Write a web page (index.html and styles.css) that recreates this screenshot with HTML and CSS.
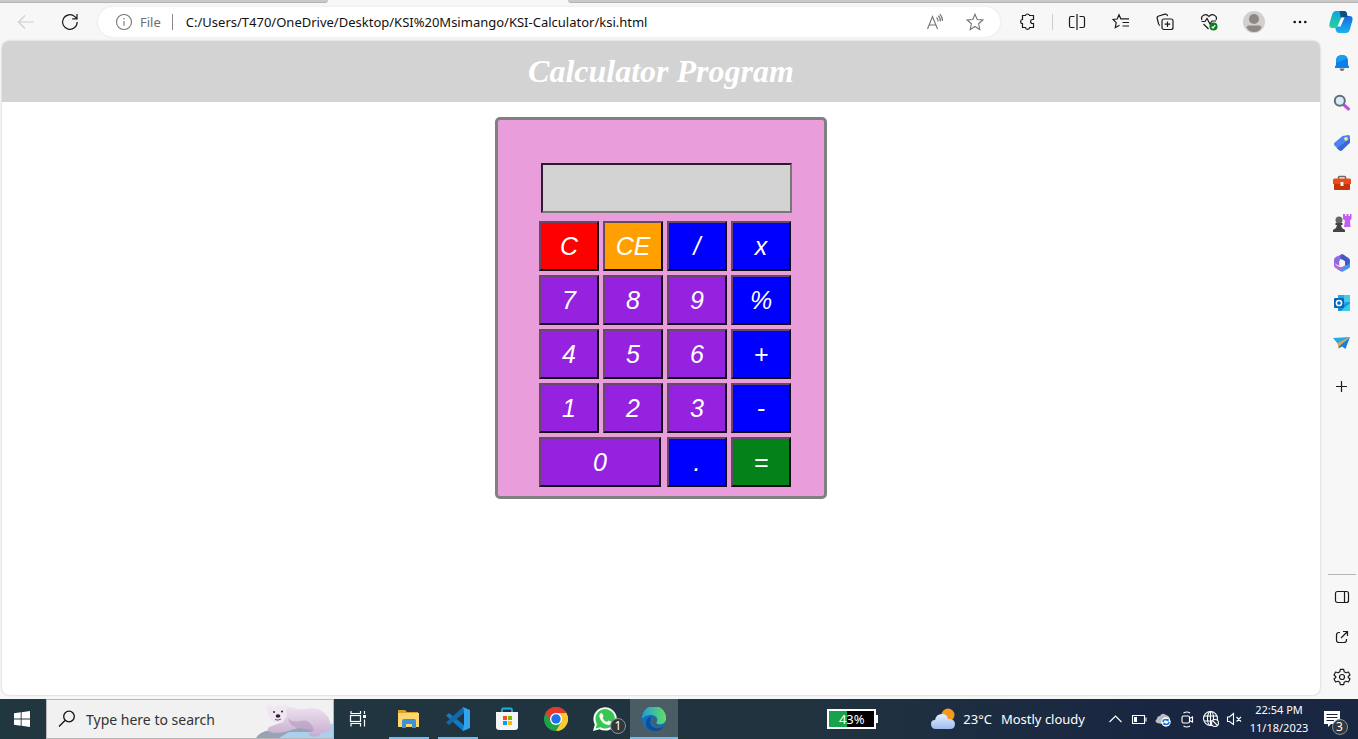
FILE: index.html
```html
<!DOCTYPE html>
<html lang="en">
<head>
<meta charset="utf-8">
<title>Calculator Program</title>
<link rel="stylesheet" href="styles.css">
</head>
<body>
<div class="tabstrip"><div class="tab tab-left"></div><div class="tab-active"></div><div class="tab tab-right"></div></div>

<header class="toolbar">
  <button class="tool nav faded" aria-label="Back"><svg width="18" height="16" viewBox="0 0 18 16"><path d="M17 8H1.500M8 1.500L1.500 8L8 14.500"/></svg></button>
  <button class="tool nav" aria-label="Refresh"><svg width="18" height="18" viewBox="0 0 18 18"><path d="M16.200 9A7.300 7.300 0 1 1 13.800 3.600L15.800 5.500M16 1V5.800H11.200"/></svg></button>
  <div class="address">
    <button class="site" aria-label="Site information"><svg width="18" height="18" viewBox="0 0 18 18"><circle cx="9" cy="9" r="7.500"/><path d="M9 8V12.800M9 5V6.500"/></svg><span>File</span></button>
    <input class="url" type="text" aria-label="Address" value="C:/Users/T470/OneDrive/Desktop/KSI%20Msimango/KSI-Calculator/ksi.html">
    <button class="inner" aria-label="Read aloud"><svg width="18" height="18" viewBox="0 0 18 18"><path d="M1.500 16L6.500 3.500L11.500 16M3.300 12H9.700M10.500 4.500Q12.300 5.800 12 8.500M12.200 2.800Q14.700 4.700 14.300 8.500M13.700 1.200Q16.700 4 16.500 8"/></svg></button>
    <button class="inner" aria-label="Add to favorites"><svg width="18" height="18" viewBox="0 0 18 18"><path d="M9 1.300L11.200 6.500L16.800 7L12.600 10.800L13.800 16.500L9 13.500L4.200 16.500L5.400 10.800L1.200 7L6.800 6.500Z"/></svg></button>
  </div>
  <button class="tool" aria-label="Extensions"><svg width="18" height="18" viewBox="0 0 18 18"><path d="M3.500 2.500H6.500C6.800 .5 10.200 .5 10.500 2.500H14.500V6.500H13.500C11 6.500 11 10.500 13.500 10.500H14.500V14.500H10.700C10.400 17 6.800 17 6.500 14.500H3.500V10.700C1 10.500 1 6.800 3.500 6.500Z"/></svg></button>
  <span class="divider"></span>
  <button class="tool" aria-label="Split screen"><svg width="18" height="18" viewBox="0 0 18 18"><path d="M9 1V17M6.500 3.500H3Q1.500 3.500 1.500 5V13Q1.500 14.500 3 14.500H6.500M11.500 3.500H15Q16.500 3.500 16.500 5V13Q16.500 14.500 15 14.500H11.500"/></svg></button>
  <button class="tool" aria-label="Favorites"><svg width="18" height="18" viewBox="0 0 18 18"><path d="M10.500 5.800H8.800L7 1.800L5.200 6L1 6.500L4.200 9.700L3.300 14.700L7.500 12.300M10.500 5.800H17M10.500 9.500H17M10.500 13H17"/></svg></button>
  <button class="tool" aria-label="Collections"><svg width="18" height="18" viewBox="0 0 18 18"><rect x="6" y="6" width="11" height="10.500" rx="2"/><path d="M11.500 8.500V14M8.700 11.200H14.300M4 12.500Q2.800 12 2.500 10.500L1.200 5.500Q.8 3.500 2.700 3L9 1.200Q10.800 .8 11.700 3"/></svg></button>
  <button class="tool" aria-label="Browser essentials"><svg width="18" height="18" viewBox="0 0 18 18"><path d="M2 7C0 3 5.800-.5 9 3.500C12-.5 18 3 16 7M1.500 8.500H5L7 5.500L10 11L12 8H16M3.500 11L8.500 16"/><circle cx="13.500" cy="13.500" r="4" fill="#107c22" stroke="none"/><path d="M11.700 13.600L13 15L15.300 12.200" stroke="#fff"/></svg></button>
  <button class="tool wide" aria-label="Profile"><svg width="22" height="22" viewBox="0 0 22 22" stroke="none"><circle cx="11" cy="11" r="11" fill="#d2cfcc"/><circle cx="11" cy="8" r="5" fill="#8b8886"/><path d="M3.500 16.500Q3.500 14.500 6 14.500H16Q18.500 14.500 18.500 16.500Q16 21 11 21Q6 21 3.500 16.500" fill="#8b8886"/></svg></button>
  <button class="tool wide" aria-label="Settings and more"><svg width="16" height="16" viewBox="0 0 16 16"><g fill="#111" stroke="none"><circle cx="2.700" cy="8" r="1.300"/><circle cx="8" cy="8" r="1.300"/><circle cx="13.300" cy="8" r="1.300"/></g></svg></button>
  <button class="tool copilot" aria-label="Copilot"><svg width="24" height="24" viewBox="0 0 24 24" stroke="none"><defs><linearGradient id="cpa" x1="0" y1="0" x2="0" y2="1"><stop offset="0" stop-color="#0ba5dd"/><stop offset="1" stop-color="#27d49a"/></linearGradient><linearGradient id="cpb" x1="0" y1="0" x2="0" y2="1"><stop offset="0" stop-color="#1769e0"/><stop offset="1" stop-color="#17b5ed"/></linearGradient></defs><path d="M7 1H15Q17.500 1 18 4L18.700 7H14Q12 7 11.300 9L9 16Q8.300 18 6 18H3Q-.5 18 .6 13L3 5Q4 1 7 1" fill="url(#cpa)"/><path d="M17 23H10Q7.500 23 6.800 20L6.200 17.500Q8.600 18 9.500 15L12 8Q12.800 6 15 6H20.500Q24.500 6 23.300 11L21 19Q20 23 17 23" fill="url(#cpb)"/><path d="M10.500 1H15Q17.500 1 18 4L18.700 7H14Q12.500 7 11.800 8Z" fill="#0c4e85"/><path d="M12.500 7.500H15.500L11.500 16.500H8.500Z" fill="#fff"/></svg></button>
</header>

<div class="middle">
  <main class="page">
    <h1 class="title">Calculator Program</h1>
    <form class="calculator">
      <input class="display" type="text" aria-label="Result" readonly>
      <div class="keys">
        <button type="button" class="key red">C</button>
        <button type="button" class="key orange">CE</button>
        <button type="button" class="key blue">/</button>
        <button type="button" class="key blue">x</button>
        <button type="button" class="key">7</button>
        <button type="button" class="key">8</button>
        <button type="button" class="key">9</button>
        <button type="button" class="key blue">%</button>
        <button type="button" class="key">4</button>
        <button type="button" class="key">5</button>
        <button type="button" class="key">6</button>
        <button type="button" class="key blue">+</button>
        <button type="button" class="key">1</button>
        <button type="button" class="key">2</button>
        <button type="button" class="key">3</button>
        <button type="button" class="key blue">-</button>
        <button type="button" class="key zero">0</button>
        <button type="button" class="key blue">.</button>
        <button type="button" class="key green">=</button>
      </div>
    </form>
  </main>

  <aside class="sidebar">
    <button class="side" aria-label="Notifications"><svg width="18" height="18" viewBox="0 0 18 18"><path d="M6.500 14.500H11.500Q11 17 9 17Q7 17 6.500 14.500" fill="#6a6e75"/><path d="M2 14V12.500L3 11V7Q3 1 9 1Q15 1 15 7V11L16 12.500V14Z" fill="#0f7fe8"/><path d="M3 7Q3 1 9 1Q13 1 14 4Q8 8 3 8Z" fill="#159fee"/></svg></button>
    <button class="side" aria-label="Search"><svg width="18" height="18" viewBox="0 0 18 18"><path d="M11.500 11.500L15.500 15" stroke="#c44be8" stroke-width="3" stroke-linecap="round"/><circle cx="6.800" cy="6.800" r="5" fill="#d5edfa" stroke="#666c73" stroke-width="2"/></svg></button>
    <button class="side" aria-label="Shopping"><svg width="18" height="18" viewBox="0 0 18 18"><path d="M9.500 2L15.500 1Q17 1 17 2.500V8.500L9 16.200Q7.500 17.500 6 16L1.500 11.500Q.3 10 1.500 8.800Z" fill="#4b83f0"/><path d="M17 8.500L9 16.200Q7.500 17.500 6 16L4 14L17 5Z" fill="#3a66dc"/><circle cx="13" cy="4.800" r="1.900" fill="#ffe785"/></svg></button>
    <button class="side" aria-label="Tools"><svg width="18" height="18" viewBox="0 0 18 18"><path d="M5.500 5V3.500Q5.500 2.500 6.500 2.500H11.500Q12.500 2.500 12.500 3.500V5" fill="none" stroke="#696969" stroke-width="1.500"/><rect x="1" y="5" width="16" height="11" rx="1" fill="#c7340c"/><path d="M0 6Q0 4.500 1.500 4.500H16.500Q18 4.500 18 6V10H0Z" fill="#e84a19"/><rect x="7.500" y="8" width="3" height="4" fill="#eee"/></svg></button>
    <button class="side" aria-label="Games"><svg width="20" height="20" viewBox="0 0 20 20"><path d="M11 1H13V3H14.500V1H16.500V3H18V1H19.500V6L18 7.500L18.500 14H12L13 7.500L11 6Z" fill="#c45df0"/><circle cx="7" cy="7" r="3.500" fill="#666"/><path d="M3.500 10H10.500V12H9L10 15L13 17V19H1V17L4 15L5 12H3.500Z" fill="#444"/></svg></button>
    <button class="side" aria-label="Microsoft 365"><svg width="18" height="18" viewBox="0 0 18 18"><path d="M5 2L8 .5Q9 0 10 .5L12 1.500Q6.500 4 6.500 8V12L1 9V6Q1 3.500 5 2" fill="#8a6ce0"/><path d="M8 .5Q9 0 10 .5L15.500 4Q17 5 17 7V12Q17 13 15.500 13.500L12 11V7.500L7 4.500Q8 1.500 8 .5" fill="#4358c5"/><path d="M17 8V12Q17 13.500 15.500 14.500L10 17.600Q9 18 8 17.500L4 15Q11 15 12 11Q15.500 12 17 8" fill="#3b9be8"/><path d="M1 7V11.500Q1 13 2.500 14L7 16.500Q11 16 12 11L9 12.800Q7 13.500 4.500 12Q1.500 10 1 7" fill="#ad69db"/><path d="M9 5.500L12 7.500V11L9 12.800L6.300 11V7.500Z" fill="#f7f7f7"/></svg></button>
    <button class="side" aria-label="Outlook"><svg width="18" height="18" viewBox="0 0 18 18"><rect x="5" y="1" width="12" height="14" fill="#27a7e8"/><path d="M11 1H17V8H11Z" fill="#48caee"/><path d="M5 17V13L17 8V16Q17 17 16 17Z" fill="#1790d9"/><path d="M12 13L17 9V17H8Z" fill="#37cce8"/><rect x="1" y="4" width="10" height="10" rx="1" fill="#0567b8"/><circle cx="6" cy="9" r="2.600" fill="none" stroke="#fff" stroke-width="1.500"/></svg></button>
    <button class="side" aria-label="Drop"><svg width="18" height="18" viewBox="0 0 18 18"><path d="M0 4L17 3L5 10Z" fill="#23a9ed"/><path d="M17 3L12.500 15L7 11Z" fill="#1780dc"/><path d="M17 3L4.500 9L5.500 14.500L7.500 10.500Z" fill="#e8a43c"/><path d="M5.500 14.500L7 11L9 12.500Z" fill="#1768ae"/></svg></button>
    <button class="side add" aria-label="Customize"><svg width="18" height="18" viewBox="0 0 18 18"><path class="line" d="M8.500 3V14M3 8.500H14"/></svg></button>
    <div class="side-bottom">
      <button class="side" aria-label="Hide sidebar"><svg width="18" height="18" viewBox="0 0 18 18"><rect class="line" x="2.500" y="3.500" width="13" height="11" rx="2"/><path class="line" d="M11.500 3.500V14.500"/></svg></button>
      <button class="side" aria-label="Open in new window"><svg width="18" height="18" viewBox="0 0 18 18"><path class="line" d="M7 4.500H6Q3.500 4.500 3.500 7V12Q3.500 14.500 6 14.500H11Q13.500 14.500 13.500 12V11M10 3.500H14.500V8M8 10L14.500 3.500"/></svg></button>
      <button class="side" aria-label="Settings"><svg width="18" height="18" viewBox="0 0 18 18"><path class="line" d="M7.300 1.300H10.700L11.200 3.800L13 4.800L15.400 4L17 7L15.200 8.500V9.500L17 11L15.400 14L13 13.200L11.200 14.200L10.700 16.700H7.300L6.800 14.200L5 13.200L2.600 14L1 11L2.800 9.500V8.500L1 7L2.600 4L5 4.800L6.800 3.800Z" stroke-linejoin="round"/><circle class="line" cx="9" cy="9" r="2.500"/></svg></button>
    </div>
  </aside>
</div>

<footer class="taskbar">
  <button class="start" aria-label="Start"><svg width="16" height="16" viewBox="0 0 16 16" fill="#fff"><path d="M0 2.200L6.700 1.300V7.500H0ZM7.600 1.200L16 0V7.500H7.600ZM0 8.400H6.700V14.700L0 13.800ZM7.600 8.400H16V16L7.600 14.800Z"/></svg></button>
  <label class="search">
    <svg width="18" height="18" viewBox="0 0 18 18" fill="none" stroke="#111" stroke-width="1.300"><circle cx="11" cy="6.500" r="5.300"/><path d="M7 10.500L1 16.500"/></svg>
    <input class="search-text" type="text" placeholder="Type here to search" aria-label="Search">
    <svg class="bear" width="78" height="37" viewBox="0 0 78 37"><defs><linearGradient id="fur" x1="0" y1="0" x2="0" y2="1"><stop offset="0" stop-color="#eee2ef"/><stop offset="1" stop-color="#c6acd0"/></linearGradient></defs><path d="M1 37Q4 31 15 29L60 22L78 24V37Z" fill="#98a3b6"/><path d="M24 37L34 31H68L78 22V37Z" fill="#a9d0ee"/><path d="M26 9Q30 4 36 6Q46 10 55 7Q66 6 73 16Q78 25 74 30Q70 32 66 32Q65 36 60 35.500Q54 36 54 33Q56 30 59 29Q50 28 43 27L30 31Q20 33 15 31Q11 29 14 26L25 22Z" fill="url(#fur)"/><path d="M13 10Q10 8 12 5Q15 3 18 6Q22 3 27 5Q29 2 32 4Q34 7 31 9Q33 15 30 18Q28 24 22 21Q17 21 15 17Q12 14 13 10" fill="#efe6f1"/><path d="M33 17Q37 22 45 20Q55 17 59 29Q50 28 43 27Q34 25 33 17" fill="#b08fbe" opacity=".5"/><circle cx="19" cy="11" r="1" fill="#29202d"/><circle cx="27" cy="10.500" r="1" fill="#29202d"/><ellipse cx="23" cy="15" rx="2.300" ry="1.700" fill="#251f29"/><path d="M20 18.500Q23 20 26 18" fill="none" stroke="#6c5473"/></svg>
  </label>
  <button class="app view" aria-label="Task view"><svg width="18" height="18" viewBox="0 0 18 18" fill="none" stroke="#fff" stroke-width="1.200"><path d="M2 1V3.500H11.500V1M2 16.500V13.500H11.500V16.500M15.500 1V4M15.500 9.500V16.500"/><rect x="1.500" y="5.500" width="10" height="6"/><rect x="14" y="5" width="3" height="3" fill="#fff" stroke="none"/></svg></button>
  <button class="app open" aria-label="File Explorer"><svg width="24" height="24" viewBox="0 0 24 24"><path d="M1 3H8L10 5H21V9H1Z" fill="#dca02b"/><path d="M1 6H22V20H1Z" fill="#ffd66b"/><path d="M5 21V14Q5 12 7 12H17Q19 12 19 14V21H15V17H9V21Z" fill="#3e91d6"/></svg></button>
  <button class="app open" aria-label="Visual Studio Code"><svg width="24" height="24" viewBox="0 0 24 24"><path d="M0 8.500L3 6L18 18V24H17Z" fill="#127bc4"/><path d="M0 15.500L17 0L18 6L3 18Z" fill="#1468a8"/><path d="M17 0L24 3V21L17 24L18 18V6Z" fill="#32a5ed"/></svg></button>
  <button class="app" aria-label="Microsoft Store"><svg width="24" height="24" viewBox="0 0 24 24"><path d="M7 6V3Q7 1.500 8.500 1.500H15.500Q17 1.500 17 3V6" fill="none" stroke="#22aee0" stroke-width="1.800"/><path d="M1 5H23V20Q23 23 20 23H4Q1 23 1 20Z" fill="#f5f5f5"/><path d="M8 9H12V13H8Z" fill="#f25022"/><path d="M13 9H17V13H13Z" fill="#7fba00"/><path d="M8 14H12V18H8Z" fill="#00a4ef"/><path d="M13 14H17V18H13Z" fill="#ffb900"/></svg></button>
  <button class="app" aria-label="Google Chrome"><svg width="24" height="24" viewBox="0 0 24 24"><circle cx="12" cy="12" r="12" fill="#1fa34a"/><path d="M12 6H22.400A12 12 0 0 1 12 24L17.200 15Z" fill="#fcc934"/><path d="M1.600 6A12 12 0 0 1 22.400 6H12L6.800 15Z" fill="#e33b2e"/><circle cx="12" cy="12" r="6" fill="#fff"/><circle cx="12" cy="12" r="4.700" fill="#1a73e8"/></svg></button>
  <button class="app" aria-label="WhatsApp"><span class="stack"><svg width="24" height="24" viewBox="0 0 24 24"><path d="M0 24L1.800 17.500A11.700 11.700 0 1 1 6.500 22.200Z" fill="#f5fff6"/><path d="M2.500 21.500L4 17A9.700 9.700 0 1 1 7.500 20.300Z" fill="#38c652"/><path d="M7 7Q8.500 5 9.500 7L10.500 9Q10.500 10 9.500 11Q11 14 14 15L15.500 13.500L18.500 15Q18 18 15.500 18Q8.500 17 6.500 10Q6 8 7 7" fill="#fff"/></svg><span class="badge chat">1</span></span></button>
  <button class="app current" aria-label="Microsoft Edge"><svg width="24" height="24" viewBox="0 0 24 24"><defs><linearGradient id="ea"><stop offset="0" stop-color="#219bdc"/><stop offset="1" stop-color="#61df63"/></linearGradient></defs><circle cx="12" cy="12" r="12" fill="#1271bf"/><path d="M0 12A12 12 0 0 1 24 10C25 17 18 19 14 16C17 13 15 8 9 8Q3 8 0 12" fill="url(#ea)"/><path d="M9 10Q6 19 14 21Q18 22 22 19Q18 25 11 24Q3 22 4 15Q5 10 10 9Z" fill="#0c4e99"/><path d="M11 11Q13 10 15 12Q15 14 13.500 15Q14 18 18 18.500L23 17Q18 21 14 20Q8 17 11 11" fill="#4b5d64"/></svg></button>

  <div class="status">
    <div class="battery"><span class="level">43%</span></div>
    <button class="weather"><svg width="26" height="22" viewBox="0 0 26 22"><defs><linearGradient id="cl" x1="0" y1="0" x2="0" y2="1"><stop offset="0" stop-color="#e5efff"/><stop offset="1" stop-color="#9fbcf0"/></linearGradient></defs><circle cx="18" cy="7" r="6.500" fill="#f49a1c"/><path d="M6 21Q1 21 1 16Q1 12 5 12Q6 6 12 6Q17 6 18 11Q25 11 25 16Q25 21 20 21Z" fill="url(#cl)"/></svg><span>23°C</span><span>Mostly cloudy</span></button>
    <div class="tray">
      <button aria-label="Show hidden icons"><svg width="18" height="18" viewBox="0 0 18 18"><path d="M3.500 12L9.500 6L15.500 12"/></svg></button>
      <button aria-label="Battery"><svg width="18" height="18" viewBox="0 0 18 18"><path d="M2.500 5.500H14.500V13.500H2.500ZM16 7.500V11.500"/><path d="M4 7H7V12H4Z" fill="#fff" stroke="none"/></svg></button>
      <button aria-label="OneDrive"><svg width="18" height="18" viewBox="0 0 18 18" stroke="none"><path d="M3 13Q0 11 3 9Q3 6 6 6Q8 2 12 5Q16 6 16 10L8 14Z" fill="#b8bdc5"/><circle cx="12" cy="12" r="4.700" fill="#fff"/><path d="M9 12Q9 9.500 12 9.500L14 10.500V9M15 12Q15 14.500 12 14.500L10 13.500V15" fill="none" stroke="#1674ce" stroke-width="1.400"/></svg></button>
      <button aria-label="Camera"><svg width="18" height="18" viewBox="0 0 18 18"><rect x="4" y="6" width="7.500" height="7" rx="1.500"/><path d="M11.500 8.500L14.500 7V12L11.500 10.500M5.500 3Q9 1 12 3M5.500 16Q9 18 12 16"/></svg></button>
      <button aria-label="Network"><svg width="18" height="18" viewBox="0 0 18 18"><circle cx="8.500" cy="8.500" r="7"/><ellipse cx="8.500" cy="8.500" rx="3" ry="7"/><path d="M2 6H15M2 11H10M8.500 1.500V15.500"/><circle cx="13" cy="13" r="3.500" fill="#1c2b42"/><path d="M10.500 10.500L15.500 15.500"/></svg></button>
      <button aria-label="Volume muted"><svg width="18" height="18" viewBox="0 0 18 18"><path d="M1.500 7H3.500L7.500 3.500V14.500L3.500 11.500H1.500ZM10.500 7L15 11.500M15 7L10.500 11.500"/></svg></button>
    </div>
    <div class="clock"><span>22:54 PM</span><span>11/18/2023</span></div>
    <button class="notices" aria-label="Notifications"><span class="stack"><svg width="18" height="18" viewBox="0 0 18 18"><path d="M1 1H17V14H8L5 17V14H1Z" fill="#fff"/><path d="M3.500 4.500H14.500M3.500 7.500H14.500M3.500 10.500H11" stroke="#1b2842"/></svg><span class="badge count">3</span></span></button>
  </div>
</footer>
</body>
</html>
```

FILE: styles.css
```css
* { box-sizing: border-box; }

body {
  margin: 0;
  min-height: 100vh;
  display: flex;
  flex-direction: column;
  background: #f7f7f7;
  color: #111;
  font-family: "Noto Sans", "Liberation Sans", sans-serif;
  font-size: 13px;
}

button, input { font: inherit; color: inherit; }
button { padding: 0; border: 0; background: none; }
svg { display: block; flex: none; }

/* Tab strip */
.tabstrip { display: flex; height: 3px; }
.tab { background: #c9c9c9; border-bottom: 1px solid #b4b4b4; }
.tab-left { width: 328px; border-bottom-right-radius: 3px; }
.tab-active { width: 240px; }
.tab-right { flex: 1; border-bottom-left-radius: 3px; }

/* Browser toolbar */
.toolbar { display: flex; align-items: center; height: 38px; padding-left: 4px; }
.toolbar svg { fill: none; stroke: #1b1b1b; stroke-width: 1.2; }
.toolbar svg[stroke="none"] { stroke: none; }
.tool { width: 44px; height: 30px; display: flex; align-items: center; justify-content: center; }
.tool.faded svg { stroke: #cfcfcf; }
.tool.wide { width: 46px; }
.tool.copilot { width: 35px; }
.divider { width: 1px; height: 16px; margin: 0 2px; background: #cfcfcf; }

.address {
  flex: 1;
  display: flex;
  align-items: center;
  height: 30px;
  margin: 0 6px;
  padding: 0 5px 0 17px;
  border-radius: 15px;
  background: #fff;
  box-shadow: 0 0 3px #e4e4e4;
}
.address svg { stroke: #757575; stroke-width: 1.1; }
.site { display: flex; align-items: center; gap: 7px; height: 16px; padding-right: 11px; border-right: 1px solid #8a8a8a; color: #6e6e6e; }
.url { flex: 1; min-width: 0; border: 0; padding: 0 0 0 13px; background: none; outline: none; }
.inner { width: 40px; height: 30px; display: flex; align-items: center; justify-content: center; }

/* Viewport and sidebar */
.middle { flex: 1; display: flex; }
.page {
  flex: 1;
  margin: 0 0 4px 2px;
  border-radius: 7px;
  overflow: hidden;
  background: #fff;
  box-shadow: 0 0 2px #b5b5b5;
}
.title {
  margin: 0;
  padding: 12px 0;
  background: #d3d3d3;
  color: #fff;
  text-align: center;
  font: italic bold 32px/37px "Liberation Serif", serif;
}

.calculator {
  width: fit-content;
  margin: 15px auto;
  padding: 43px 33px 9px 41px;
  border: 3px solid #808080;
  border-radius: 5px;
  background: #e99edb;
}
.display {
  display: block;
  width: 251px;
  height: 50px;
  margin: 0 -1px 8px 2px;
  border: 2px solid;
  border-color: #2b1b2d #777 #777 #2b1b2d;
  background: #d3d3d3;
  outline: none;
}
.keys { display: grid; grid-template-columns: repeat(4, 60px); grid-auto-rows: 50px; gap: 4px; }
.key {
  border: 2px solid;
  border-color: #664966 #140b18 #140b18 #664966;
  background: #9522de;
  color: #fff;
  font: italic 25px "Liberation Sans", sans-serif;
}
.red { background: #f00; }
.orange { background: #ffa000; }
.blue { background: #00f; }
.green { background: #048119; }
.zero { grid-column: span 2; margin-right: 2px; }

.sidebar { width: 38px; display: flex; flex-direction: column; padding: 2px 2px 2px 8px; }
.side { height: 40px; width: 28px; display: flex; align-items: center; justify-content: center; }
.side.add { margin-top: 4px; }
.line { fill: none; stroke: #1b1b1b; stroke-width: 1.2; }
.side-bottom { margin-top: auto; padding-top: 2px; border-top: 1px solid #b5b5b5; }

/* Taskbar */
.taskbar {
  display: flex;
  height: 40px;
  color: #fff;
  background: linear-gradient(90deg, #21373f, #20333f 60%, #192642 85%, #1a2743);
}
.start { width: 46px; padding-left: 14px; }
.search {
  width: 288px;
  display: flex;
  align-items: center;
  padding-left: 11px;
  border: 1px solid #b7b7b7;
  background: #f1f1f1;
}
.search-text { flex: 1; min-width: 0; margin-left: 10px; padding: 0; border: 0; background: none; outline: none; font-size: 14px; color: #333; }
.search-text::placeholder { color: #333; opacity: 1; }
.bear { align-self: flex-end; }
.app { width: 48px; margin-left: 1px; display: flex; align-items: center; justify-content: center; padding-top: 2px; border-bottom: 2px solid transparent; }
.app.view { margin: 0 2px 0 0; }
.app.open { width: 40px; margin: 0 4px 0 5px; border-color: #76b9ed; }
.app.current { background: #4b5d64; border-color: #76b9ed; }

.stack { position: relative; display: block; }
.badge {
  position: absolute;
  width: 16px;
  height: 16px;
  border: 1px solid #8d9499;
  border-radius: 50%;
  background: #30383e;
  color: #fff;
  font-size: 12px;
  line-height: 14px;
  text-align: center;
}
.chat { left: 17px; top: 11px; }
.count { left: 9px; top: 9px; }

.status { display: flex; align-items: center; margin-left: auto; }
.battery {
  position: relative;
  width: 49px;
  height: 20px;
  border: 2px solid #fff;
  background: linear-gradient(90deg, #16a34a 40%, #000 40%);
  text-align: center;
  line-height: 16px;
}
.battery::after {
  content: "";
  position: absolute;
  left: 47px;
  top: 4px;
  width: 2px;
  height: 8px;
  background: #fff;
}
.weather { display: flex; align-items: center; gap: 9px; margin-left: 54px; white-space: nowrap; }
.weather svg { margin-right: -2px; }
.tray { display: flex; margin-left: 18px; }
.tray button { width: 24px; display: flex; justify-content: center; }
.tray svg { fill: none; stroke: #fff; stroke-width: 1.1; }
.tray svg[stroke="none"] { stroke: none; }
.clock { width: 62px; margin-left: 1px; display: flex; flex-direction: column; align-items: center; font-size: 11px; line-height: 18px; }
.notices { width: 48px; display: flex; justify-content: center; padding-right: 5px; }
```
